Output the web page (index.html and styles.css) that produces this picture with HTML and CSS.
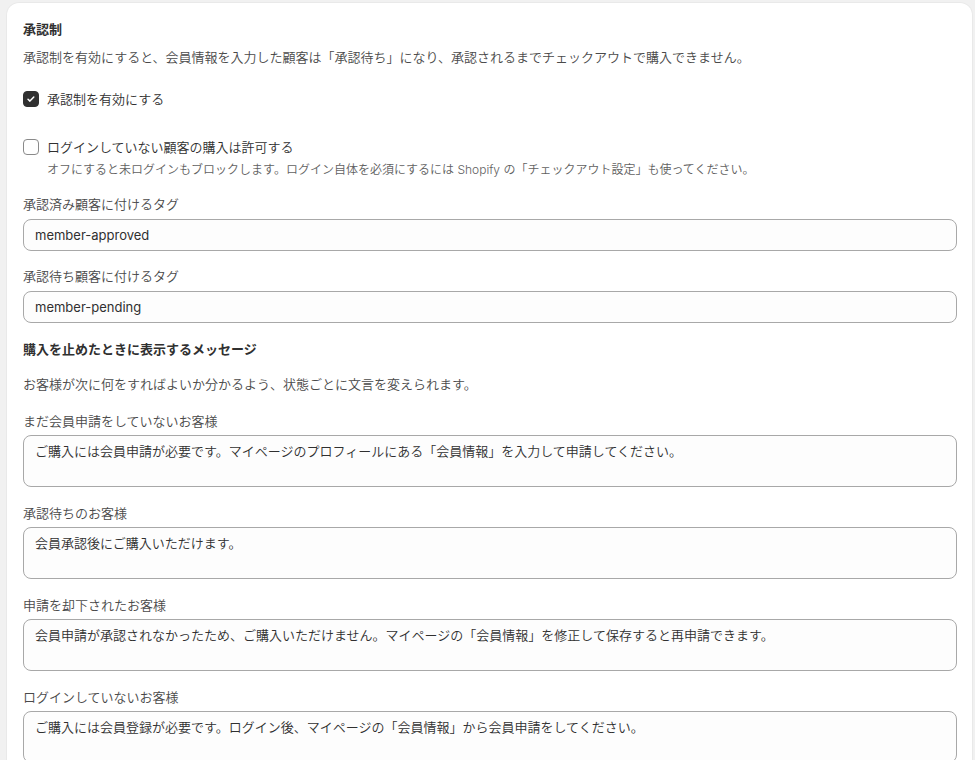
FILE: index.html
```html
<!DOCTYPE html>
<html lang="ja">
<head>
<meta charset="utf-8">
<title>承認制</title>
<link rel="stylesheet" href="styles.css">
</head>
<body>
<div class="page">
  <section class="card">
    <h2 class="title">承認制</h2>
    <p class="desc">承認制を有効にすると、会員情報を入力した顧客は「承認待ち」になり、承認されるまでチェックアウトで購入できません。</p>

    <label class="check check-first">
      <span class="box box-on"><svg viewBox="0 0 16 16" width="16" height="16"><path d="M4.6 8.3l2.2 2.1 4.4-4.6" fill="none" stroke="#fff" stroke-width="1.7" stroke-linecap="round" stroke-linejoin="round"/></svg></span>
      <span class="check-label">承認制を有効にする</span>
    </label>

    <div class="check-group">
      <label class="check">
        <span class="box"></span>
        <span class="check-label">ログインしていない顧客の購入は許可する</span>
      </label>
      <p class="help">オフにすると未ログインもブロックします。ログイン自体を必須にするには Shopify の「チェックアウト設定」も使ってください。</p>
    </div>

    <div class="field field-after-help">
      <div class="label">承認済み顧客に付けるタグ</div>
      <input class="input" type="text" value="member-approved">
    </div>
    <div class="field">
      <div class="label">承認待ち顧客に付けるタグ</div>
      <input class="input" type="text" value="member-pending">
    </div>

    <h3 class="subhead">購入を止めたときに表示するメッセージ</h3>
    <p class="desc desc-sub">お客様が次に何をすればよいか分かるよう、状態ごとに文言を変えられます。</p>

    <div class="field field-first-msg">
      <div class="label">まだ会員申請をしていないお客様</div>
      <textarea class="textarea" rows="2">ご購入には会員申請が必要です。マイページのプロフィールにある「会員情報」を入力して申請してください。</textarea>
    </div>
    <div class="field">
      <div class="label">承認待ちのお客様</div>
      <textarea class="textarea" rows="2">会員承認後にご購入いただけます。</textarea>
    </div>
    <div class="field">
      <div class="label">申請を却下されたお客様</div>
      <textarea class="textarea" rows="2">会員申請が承認されなかったため、ご購入いただけません。マイページの「会員情報」を修正して保存すると再申請できます。</textarea>
    </div>
    <div class="field">
      <div class="label">ログインしていないお客様</div>
      <textarea class="textarea" rows="2">ご購入には会員登録が必要です。ログイン後、マイページの「会員情報」から会員申請をしてください。</textarea>
    </div>
  </section>
</div>
</body>
</html>
```

FILE: styles.css
```css
* { box-sizing: border-box; }

html, body {
  margin: 0;
  background: #f1f1f1;
  font-family: Inter, "Noto Sans CJK JP", sans-serif;
  font-size: 13px;
  line-height: 20px;
  color: #303030;
}

.page {
  padding: 3px 3px 0 7px;
}

.card {
  background: #ffffff;
  border-radius: 12px;
  padding: 16px 15px 24px 16px;
  box-shadow: 0 1px 0 rgba(26, 26, 26, 0.07), 0 0 0 1px rgba(0, 0, 0, 0.03);
}

.title,
.subhead {
  margin: 0;
  font-size: 13px;
  line-height: 20px;
  font-weight: 700;
  color: #303030;
}

.subhead {
  margin-top: 16px;
}

.desc,
.label,
.check-label,
.help,
.textarea {
  font-weight: 350;
}

.desc {
  margin: 8px 0 0;
  color: #4a4a4a;
}

.desc-sub {
  margin-top: 15px;
}

.check {
  display: flex;
  align-items: center;
  gap: 8px;
  height: 20px;
}

.check-first {
  margin-top: 22px;
}

.check-group {
  margin-top: 28px;
}

.box {
  width: 16px;
  height: 16px;
  flex: 0 0 16px;
  border-radius: 4px;
  border: 1px solid #8a8a8a;
  background: #ffffff;
  display: flex;
  align-items: center;
  justify-content: center;
}

.box-on {
  background: #303030;
  border-color: #303030;
}

.box svg {
  display: block;
}

.check-label {
  color: #303030;
}

.help {
  margin: 5px 0 0;
  padding-left: 24px;
  font-size: 12px;
  line-height: 16px;
  color: #616161;
}

.field {
  margin-top: 15px;
}

.field-after-help {
  margin-top: 16px;
}

.field-first-msg {
  margin-top: 17px;
}

.field + .field {
  margin-top: 16px;
}

.field-after-help + .field {
  margin-top: 15px;
}

.label {
  color: #4a4a4a;
  line-height: 20px;
}

.input,
.textarea {
  display: block;
  width: 100%;
  margin: 5px 0 0;
  border: 1px solid #a8a8a8;
  border-radius: 8px;
  background: #fdfdfd;
  font-family: Inter, "Noto Sans CJK JP", sans-serif;
  font-size: 13px;
  line-height: 20px;
  color: #303030;
  padding: 5px 11px;
  outline: none;
}

.input {
  height: 32px;
}

.textarea {
  margin-top: 4px;
  height: 52px;
  resize: none;
  overflow: hidden;
}
```
